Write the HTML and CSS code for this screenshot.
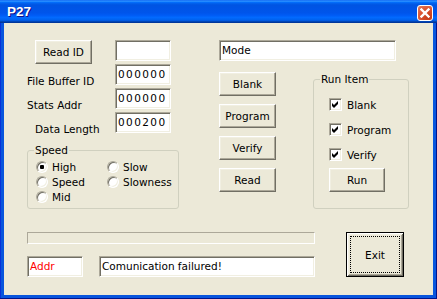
FILE: index.html
```html
<!DOCTYPE html>
<html lang="en">
<head>
  <meta charset="UTF-8" />
  <title>P27</title>
  <link rel="stylesheet" href="styles.css">
</head>
<body>
  <div class="window">
    <div class="titlebar">
      <span class="title">P27</span>
      <button class="close" aria-label="Close">
        <svg width="10" height="10" viewBox="0 0 10 10"><path d="M1.5 1.5 L8.5 8.5 M8.5 1.5 L1.5 8.5" stroke="#fff" stroke-width="2.4" stroke-linecap="square"/></svg>
      </button>
    </div>

    <div class="client">
      <div class="top">
        <!-- id / buffer fields and speed choice -->
        <div class="col-left">
          <div class="field-row">
            <button class="btn btn-readid">Read ID</button>
            <div class="edit field"></div>
          </div>
          <div class="field-row">
            <span class="lbl">File Buffer ID</span>
            <div class="edit field digits">000000</div>
          </div>
          <div class="field-row">
            <span class="lbl">Stats Addr</span>
            <div class="edit field digits">000000</div>
          </div>
          <div class="field-row">
            <span class="lbl lbl-indent">Data Length</span>
            <div class="edit field digits">000200</div>
          </div>

          <fieldset class="group speed">
            <legend>Speed</legend>
            <div class="radios">
              <label class="opt"><span class="radio checked"></span>High</label>
              <label class="opt"><span class="radio"></span>Slow</label>
              <label class="opt"><span class="radio"></span>Speed</label>
              <label class="opt"><span class="radio"></span>Slowness</label>
              <label class="opt"><span class="radio"></span>Mid</label>
            </div>
          </fieldset>
        </div>

        <!-- mode, actions and run items -->
        <div class="col-right">
          <div class="edit mode">Mode</div>
          <div class="actions">
            <div class="btn-col">
              <button class="btn">Blank</button>
              <button class="btn">Program</button>
              <button class="btn">Verify</button>
              <button class="btn">Read</button>
            </div>
            <fieldset class="group run-item">
              <legend>Run Item</legend>
              <div class="checks">
                <label class="opt"><span class="check"><svg width="7" height="7" viewBox="0 0 7 7"><path d="M0 2 L2 4 L6 0 L6 3 L2 7 L0 5 Z" fill="#000"/></svg></span>Blank</label>
                <label class="opt"><span class="check"><svg width="7" height="7" viewBox="0 0 7 7"><path d="M0 2 L2 4 L6 0 L6 3 L2 7 L0 5 Z" fill="#000"/></svg></span>Program</label>
                <label class="opt"><span class="check"><svg width="7" height="7" viewBox="0 0 7 7"><path d="M0 2 L2 4 L6 0 L6 3 L2 7 L0 5 Z" fill="#000"/></svg></span>Verify</label>
              </div>
              <button class="btn btn-run">Run</button>
            </fieldset>
          </div>
        </div>
      </div>

      <div class="bottom">
        <div class="status">
          <div class="progress"></div>
          <div class="status-row">
            <div class="edit addr">Addr</div>
            <div class="edit message">Comunication failured!</div>
          </div>
        </div>
        <button class="btn btn-default">Exit</button>
      </div>
    </div>
  </div>
</body>
</html>
```

FILE: styles.css
```css
body {
  margin: 0;
  background: #ece9d8;
}

.window {
  width: 437px;
  height: 299px;
  box-sizing: border-box;
  display: flex;
  flex-direction: column;
  background: #0855dd;
  box-shadow: inset -1px -1px #00138c, inset 1px 0 #0831d9;
  font-family: "DejaVu Sans", Verdana, sans-serif;
  font-size: 10.5px;
  color: #000;
}

/* title bar, Luna blue */
.titlebar {
  height: 23px;
  flex: none;
  display: flex;
  align-items: flex-start;
  justify-content: space-between;
  padding: 0 4px 0 7px;
  background: linear-gradient(to bottom, #0058ee 0%, #3593ff 4%, #288eff 6%, #127dff 8%, #036ffc 10%, #0262ee 14%, #0057e5 20%, #0054e3 24%, #0055eb 56%, #005bf5 66%, #026afe 76%, #0062ef 86%, #0052d6 92%, #0040ab 94%, #003092 100%);
}

.title {
  margin-top: 4px;
  font-family: "Liberation Sans", Arial, sans-serif;
  font-weight: bold;
  font-size: 13.5px;
  line-height: 15px;
  color: #fff;
  text-shadow: 1px 1px #0f1089;
}

.close {
  margin-top: 5px;
  width: 16px;
  height: 16px;
  padding: 0;
  display: grid;
  place-items: center;
  border: 1px solid #fff;
  border-radius: 3px;
  background: radial-gradient(circle at 75% 80%, #c23b17 0%, #d84c2a 45%, #e2704f 85%, #ec9a80 100%);
}

.client {
  flex: 1;
  margin: 0 4px 4px;
  background: #ece9d8;
  padding: 17px 0 0 23px;
  display: flex;
  flex-direction: column;
}

.top {
  display: flex;
}

.col-left {
  width: 152px;
}

.field-row {
  height: 24px;
  display: flex;
  align-items: flex-start;
}

.lbl {
  width: 88px;
  align-self: flex-end;
  line-height: 13px;
  white-space: nowrap;
}

.lbl-indent {
  padding-left: 8px;
  box-sizing: border-box;
}

/* classic sunken edit box */
.edit {
  box-sizing: border-box;
  height: 21px;
  background: #fff;
  border: 1px solid;
  border-color: #aca899 #fff #fff #aca899;
  box-shadow: inset 1px 1px #716f64, inset -1px -1px #f1efe2;
  padding: 0 2px;
  line-height: 19px;
  white-space: nowrap;
  overflow: hidden;
}

.field {
  width: 56px;
}

.digits {
  letter-spacing: 1.4px;
}

/* classic raised push button */
.btn {
  box-sizing: border-box;
  width: 57px;
  height: 24px;
  padding: 0;
  font: inherit;
  color: #000;
  background: #ece9d8;
  border: 1px solid;
  border-color: #fff #716f64 #716f64 #fff;
  box-shadow: inset -1px -1px #aca899, inset 1px 1px #f1efe2;
}

.btn-readid {
  margin: 0 23px 0 8px;
}

.group {
  margin: 0;
  padding: 0;
  border: 1px solid #d0d0bf;
  border-radius: 3px;
  min-width: 0;
  box-sizing: border-box;
}

.group legend {
  margin-left: 6px;
  padding: 0 1px;
  line-height: 13px;
}

.speed {
  margin-top: 8px;
  height: 65px;
}

.radios {
  padding: 2px 0 0 8px;
  display: grid;
  grid-template-columns: 71px auto;
}

.opt {
  display: flex;
  align-items: center;
  white-space: nowrap;
}

.radios .opt {
  height: 15px;
  gap: 4px;
}

.radio {
  box-sizing: border-box;
  width: 12px;
  height: 12px;
  border-radius: 50%;
  border: 1px solid;
  border-color: #aca899 #fff #fff #aca899;
  box-shadow: inset 1px 1px #716f64, inset -1px -1px #f1efe2;
  background: #fff;
}

.radio.checked {
  background: radial-gradient(circle, #000 0 2px, #fff 2.5px);
}

.col-right {
  margin-left: 40px;
}

.mode {
  width: 177px;
}

.actions {
  display: flex;
}

.btn-col {
  margin-top: 11px;
  display: flex;
  flex-direction: column;
  gap: 8px;
}

.run-item {
  margin: 12px 0 0 37px;
  width: 96px;
  height: 136px;
}

.checks {
  padding: 12px 0 0 15px;
  display: flex;
  flex-direction: column;
  gap: 12px;
}

.checks .opt {
  height: 13px;
  gap: 5px;
}

.check {
  box-sizing: border-box;
  width: 13px;
  height: 13px;
  display: grid;
  place-items: center;
  border: 1px solid;
  border-color: #aca899 #fff #fff #aca899;
  box-shadow: inset 1px 1px #716f64, inset -1px -1px #f1efe2;
  background: #fff;
}

.btn-run {
  margin: 7px 0 0 15px;
  width: 56px;
}

.bottom {
  margin-top: 23px;
  display: flex;
}

.status {
  width: 288px;
}

.progress {
  box-sizing: border-box;
  height: 12px;
  border: 1px solid;
  border-color: #aca899 #fff #fff #aca899;
}

.status-row {
  margin-top: 12px;
  display: flex;
  gap: 16px;
}

.addr {
  width: 56px;
  color: #f00;
}

.message {
  width: 216px;
}

/* default button: black frame plus focus rectangle */
.btn-default {
  position: relative;
  margin-left: 31px;
  width: 58px;
  height: 45px;
  border: 1px solid #000;
  box-shadow: inset 1px 1px #fff, inset -1px -1px #716f64, inset 2px 2px #f1efe2, inset -2px -2px #aca899;
}

.btn-default::after {
  content: "";
  position: absolute;
  inset: 3px;
  border: 1px dotted #000;
}
```
